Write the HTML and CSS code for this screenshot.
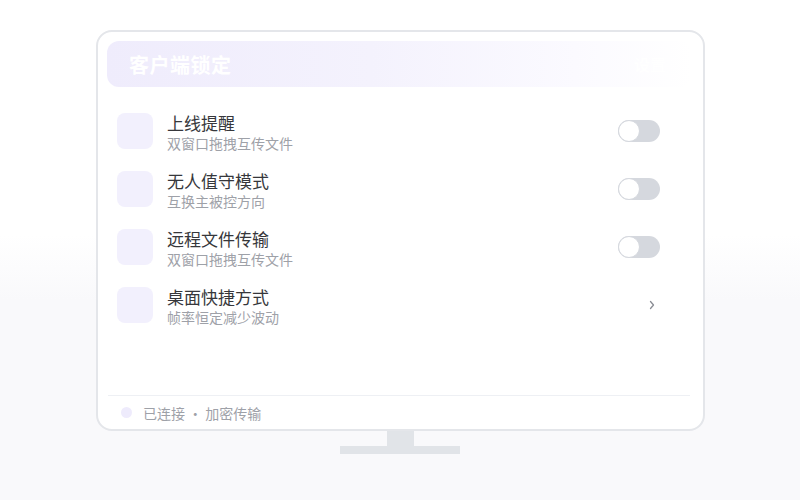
FILE: index.html
```html
<!DOCTYPE html>
<html lang="zh-CN">
<head>
<meta charset="utf-8">
<title>客户端锁定</title>
<link rel="stylesheet" href="styles.css">
</head>
<body>
<div class="scene">
  <div class="monitor">
    <div class="header">
      <span class="header-title">客户端锁定</span>
      <span class="header-extra">设置</span>
    </div>
    <div class="list">
      <div class="row">
        <div class="row-icon"></div>
        <div class="row-text">
          <div class="row-title">上线提醒</div>
          <div class="row-sub">双窗口拖拽互传文件</div>
        </div>
        <div class="toggle"><span class="knob"></span></div>
      </div>
      <div class="row">
        <div class="row-icon"></div>
        <div class="row-text">
          <div class="row-title">无人值守模式</div>
          <div class="row-sub">互换主被控方向</div>
        </div>
        <div class="toggle"><span class="knob"></span></div>
      </div>
      <div class="row">
        <div class="row-icon"></div>
        <div class="row-text">
          <div class="row-title">远程文件传输</div>
          <div class="row-sub">双窗口拖拽互传文件</div>
        </div>
        <div class="toggle"><span class="knob"></span></div>
      </div>
      <div class="row">
        <div class="row-icon"></div>
        <div class="row-text">
          <div class="row-title">桌面快捷方式</div>
          <div class="row-sub">帧率恒定减少波动</div>
        </div>
        <div class="chevron">
          <svg width="8" height="10" viewBox="0 0 8 10"><path d="M2.5 1.5 L5.5 5 L2.5 8.5" fill="none" stroke="#8a8d94" stroke-width="1.3" stroke-linecap="round" stroke-linejoin="round"/></svg>
        </div>
      </div>
    </div>
    <div class="footer">
      <span class="dot"></span>
      <span class="footer-text">已连接 · 加密传输</span>
    </div>
  </div>
  <div class="neck"></div>
  <div class="base"></div>
</div>
</body>
</html>
```
FILE: styles.css
```css
html, body {
  margin: 0;
  padding: 0;
}
body {
  width: 800px;
  height: 500px;
  overflow: hidden;
  background: linear-gradient(to bottom, #ffffff 0%, #ffffff 47%, #f9f9fb 60%, #f9f9fb 100%);
  font-family: "Noto Sans CJK SC", "Noto Sans", sans-serif;
}
.scene {
  display: flex;
  flex-direction: column;
  align-items: center;
  padding-top: 30px;
}
.monitor {
  box-sizing: border-box;
  width: 609px;
  height: 401px;
  border: 2px solid #e4e6ea;
  border-radius: 16px;
  background: #ffffff;
  padding: 9px 11px 0 9px;
  display: flex;
  flex-direction: column;
  margin-left: 1px;
}
.header {
  height: 46px;
  border-radius: 12px;
  background: linear-gradient(to right, #efecfc 0%, #f4f2fd 45%, #fbfaff 80%, #ffffff 100%);
  display: flex;
  align-items: center;
  justify-content: space-between;
  padding: 0 22px 0 22px;
}
.header-title {
  color: #ffffff;
  font-size: 20px;
  font-weight: 700;
  letter-spacing: 0.5px;
}
.header-extra {
  color: #ffffff;
  font-size: 16px;
  font-weight: 700;
  margin-right: 4px;
}
.list {
  padding: 15px 0 0 10px;
  flex: 1;
}
.row {
  display: flex;
  align-items: flex-start;
  height: 58px;
  padding-top: 11px;
  box-sizing: border-box;
}
.row-icon {
  width: 36px;
  height: 36px;
  border-radius: 8px;
  background: #f2f0fd;
  flex: none;
}
.row-text {
  margin-left: 14px;
  flex: 1;
  margin-top: 0;
}
.row-title {
  font-size: 17px;
  line-height: 20px;
  color: #36373b;
}
.row-sub {
  font-size: 14px;
  line-height: 20px;
  color: #9ea1a8;
}
.toggle {
  width: 42px;
  height: 22px;
  border-radius: 11px;
  background: #d5d8de;
  margin-top: 7px;
  margin-right: 32px;
  position: relative;
  flex: none;
}
.knob {
  position: absolute;
  left: 0;
  top: 0;
  width: 20px;
  height: 20px;
  border-radius: 50%;
  background: #ffffff;
  border: 1px solid #d5d8de;
  box-sizing: content-box;
}
.chevron {
  width: 8px;
  height: 10px;
  margin-top: 13px;
  margin-right: 36px;
  flex: none;
  display: flex;
}
.footer {
  height: 33px;
  border-top: 1px solid #eef0f4;
  display: flex;
  align-items: center;
  padding-left: 13px;
  margin-right: 2px;
  margin-left: 1px;
}
.dot {
  width: 11px;
  height: 11px;
  border-radius: 50%;
  background: #eeebfc;
}
.footer-text {
  margin-left: 11px;
  font-size: 14px;
  color: #9ea1a8;
}
.neck {
  width: 27px;
  height: 15px;
  background: #e1e4e8;
  margin-left: 1px;
}
.base {
  width: 120px;
  height: 8px;
  background: #e1e4e8;
}
```
